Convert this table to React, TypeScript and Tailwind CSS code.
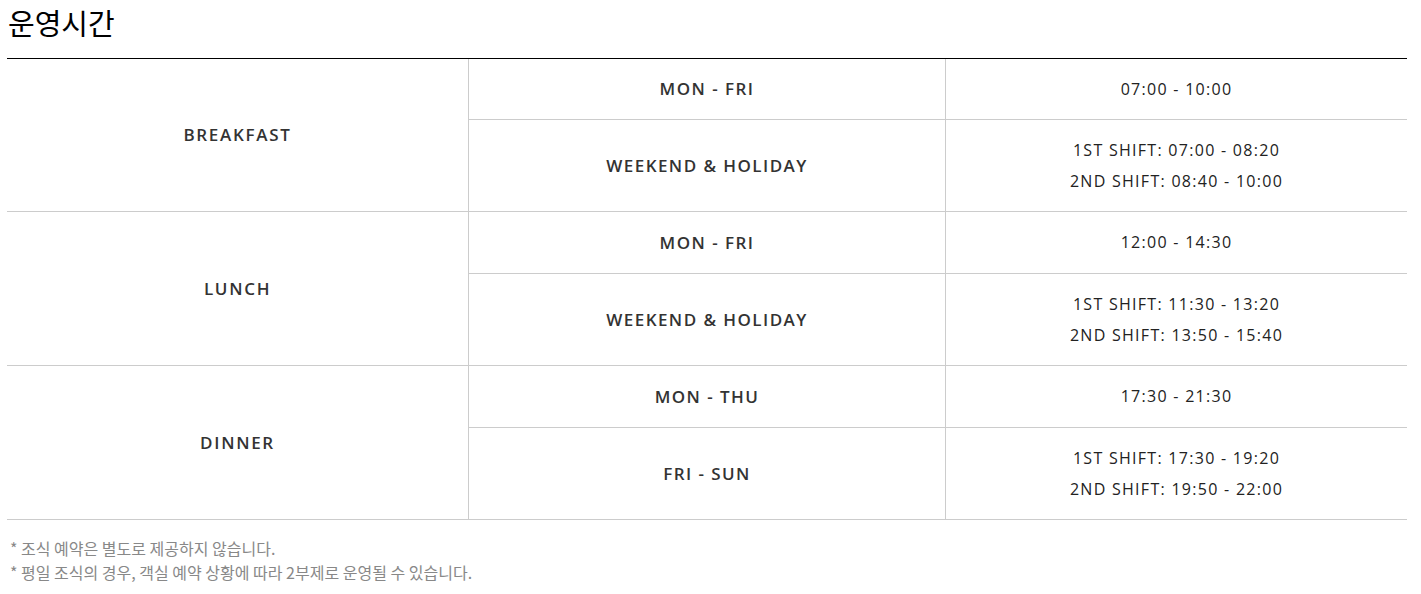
import React from "react"

type Slot = { days: string; times: string[] }
type Meal = { name: string; slots: Slot[] }

const meals: Meal[] = [
  {
    name: "BREAKFAST",
    slots: [
      { days: "MON - FRI", times: ["07:00 - 10:00"] },
      { days: "WEEKEND & HOLIDAY", times: ["1ST SHIFT: 07:00 - 08:20", "2ND SHIFT: 08:40 - 10:00"] },
    ],
  },
  {
    name: "LUNCH",
    slots: [
      { days: "MON - FRI", times: ["12:00 - 14:30"] },
      { days: "WEEKEND & HOLIDAY", times: ["1ST SHIFT: 11:30 - 13:20", "2ND SHIFT: 13:50 - 15:40"] },
    ],
  },
  {
    name: "DINNER",
    slots: [
      { days: "MON - THU", times: ["17:30 - 21:30"] },
      { days: "FRI - SUN", times: ["1ST SHIFT: 17:30 - 19:20", "2ND SHIFT: 19:50 - 22:00"] },
    ],
  },
]

export default function App() {
  return (
    <div className="min-h-screen bg-white px-[7px] pt-[2px] font-['Open_Sans','Noto_Sans_CJK_KR',sans-serif]">
      <h2 className="pl-px text-[29px] leading-[40px] text-black font-['Noto_Sans_CJK_KR',sans-serif]">운영시간</h2>
      <div className="mt-[16px] w-[1400px] border-t border-black">
        {meals.map((meal, g) => (
          <div key={meal.name} className="flex border-b border-[#cccccc]">
            <div className="flex w-[462px] items-center justify-center border-r border-[#cccccc] text-[17px] font-semibold tracking-[0.1em] text-[#333]">
              {meal.name}
            </div>
            <div className="flex flex-1 flex-col">
              {meal.slots.map((slot, i) => (
                <div
                  key={slot.days}
                  className={
                    i === 0
                      ? "flex border-b border-[#cccccc] " + (g === 0 ? "h-[61px]" : "h-[62px]")
                      : "flex h-[91px]"
                  }
                >
                  <div className="flex w-[477px] items-center justify-center border-r border-[#cccccc] text-[17px] font-semibold tracking-[0.085em] text-[#333]">
                    {slot.days}
                  </div>
                  <div className="flex flex-1 flex-col items-center justify-center text-[16px] leading-[31px] tracking-[0.08em] text-[#222]">
                    {slot.times.map((t) => (
                      <div key={t}>{t}</div>
                    ))}
                  </div>
                </div>
              ))}
            </div>
          </div>
        ))}
      </div>
      <ul className="mt-[16px] pl-[3px] text-[16px] leading-[24px] text-[#888] font-['Noto_Sans_CJK_KR',sans-serif]">
        <li>* 조식 예약은 별도로 제공하지 않습니다.</li>
        <li>* 평일 조식의 경우, 객실 예약 상황에 따라 2부제로 운영될 수 있습니다.</li>
      </ul>
    </div>
  )
}
